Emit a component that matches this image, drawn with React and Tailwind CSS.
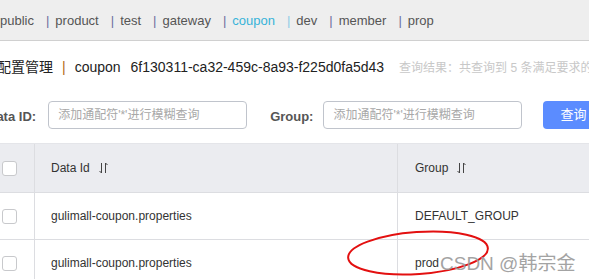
import React from 'react';

const font = { fontFamily: '"Liberation Sans", "Noto Sans CJK SC", sans-serif' };

const namespaces = ['public', 'product', 'test', 'gateway', 'coupon', 'dev', 'member', 'prop'];

function SortIcon() {
  return (
    <svg width="11" height="12" viewBox="0 0 11 12" className="ml-2 inline-block" fill="none" stroke="#444" strokeWidth="1">
      <path d="M3.5 1v10M1.5 9l2 2" />
      <path d="M7.5 11V1M9.5 3l-2-2" />
    </svg>
  );
}

function Checkbox() {
  return <div className="h-[15px] w-[15px] rounded-[3px] border border-[#c8c9cc] bg-white" />;
}

export default function App() {
  return (
    <div className="relative h-[279px] w-[589px] overflow-hidden whitespace-nowrap bg-white text-[#333]" style={font}>
      <div className="flex h-[41px] items-center border-b border-[#d0d0d0] bg-[#eeeeee] pt-[2px] text-[13px] text-[#555]">
        {namespaces.map((n, i) => (
          <div key={n} className="flex shrink-0 items-center">
            {i > 0 && (
              <span className={`ml-[12px] mr-[6px] ${n === 'dev' ? 'text-[#8fcbe6]' : 'text-[#6d6f9e]'}`}>|</span>
            )}
            <span className={n === 'coupon' ? 'text-[#37b3d9]' : ''}>{n}</span>
          </div>
        ))}
      </div>

      <div className="-ml-[3px] flex h-[52px] items-center pt-[1px] text-[14px] text-[#222]">
        <span className="shrink-0">配置管理</span>
        <span className="mx-[9px] shrink-0 text-[#b06a1a]">|</span>
        <span className="shrink-0">coupon</span>
        <span className="ml-[10px] shrink-0">6f130311-ca32-459c-8a93-f225d0fa5d43</span>
        <span className="ml-[15px] shrink-0 text-[12px] text-[#c8c8c8]">查询结果：共查询到 5 条满足要求的配置。</span>
      </div>

      <div className="-ml-[13px] flex h-[50px] items-start pt-[8px]">
        <span className="mt-[6px] shrink-0 text-[13px] font-bold text-[#555]">Data ID:</span>
        <div className="ml-[12px] flex h-[28px] w-[199px] shrink-0 items-center rounded-[4px] border border-[#c0c4cc] px-[9px] text-[12px] text-[#a8a8a8]">
          添加通配符'*'进行模糊查询
        </div>
        <span className="ml-[23px] mt-[6px] shrink-0 text-[13px] font-bold text-[#555]">Group:</span>
        <div className="ml-[10px] flex h-[28px] w-[199px] shrink-0 items-center rounded-[4px] border border-[#c0c4cc] px-[9px] text-[12px] text-[#a8a8a8]">
          添加通配符'*'进行模糊查询
        </div>
        <div className="ml-[21px] flex h-[28px] w-[60px] shrink-0 items-center justify-center rounded-[4px] bg-[#5b8cff] text-[13px] text-white">
          查询
        </div>
      </div>

      <div className="border-t border-[#e4e5e9] text-[12px] text-[#333]">
        <div className="flex h-[48px] items-center bg-[#ebecf0]">
          <div className="flex h-full w-[35px] shrink-0 items-center border-r border-[#dcdde1] pl-[2px]">
            <Checkbox />
          </div>
          <div className="flex h-full w-[363px] shrink-0 items-center border-r border-[#dcdde1] pl-[16px]">
            Data Id <SortIcon />
          </div>
          <div className="flex h-full flex-1 items-center pl-[17px]">
            Group <SortIcon />
          </div>
        </div>
        {['DEFAULT_GROUP', 'prod'].map((g) => (
          <div key={g} className="flex h-[47px] items-center border-t border-[#dcdde1]">
            <div className="flex h-full w-[35px] shrink-0 items-center border-r border-[#dcdde1] pl-[2px]">
              <Checkbox />
            </div>
            <div className="flex h-full w-[363px] shrink-0 items-center border-r border-[#dcdde1] pl-[16px]">
              gulimall-coupon.properties
            </div>
            <div className="flex h-full flex-1 items-center pl-[17px]">{g}</div>
          </div>
        ))}
      </div>

      <svg className="absolute left-[345px] top-[229px]" width="150" height="50" viewBox="0 0 150 50">
        <ellipse cx="73" cy="24" rx="70" ry="21" fill="none" stroke="#e31010" strokeWidth="2" transform="rotate(-4 73 24)" />
      </svg>
      <div className="absolute left-[440px] top-[250px] text-[19px] text-[#9a9a9a] opacity-90">
        CSDN @韩宗金
      </div>
    </div>
  );
}
